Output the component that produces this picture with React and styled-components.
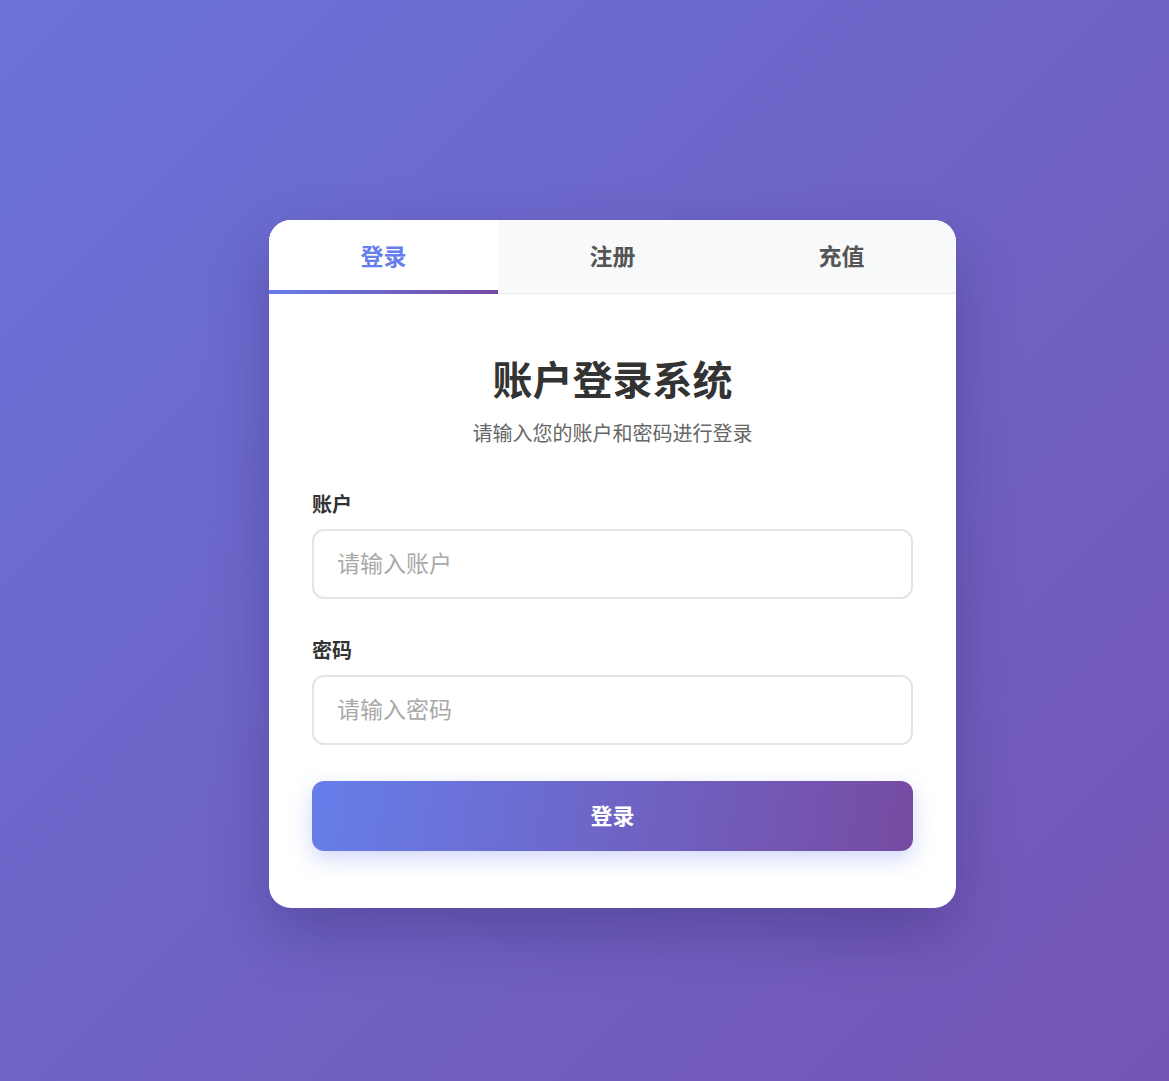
import React, { useState } from "react";
import styled, { createGlobalStyle } from "styled-components";

const Global = createGlobalStyle`
  * { box-sizing: border-box; }
  html, body { margin: 0; padding: 0; }
  body {
    min-height: 1081px;
    background: linear-gradient(135deg, #6a72d8 0%, #7455b4 100%);
    font-family: "Noto Sans CJK SC", "Noto Sans", sans-serif;
  }
`;

const Page = styled.div`
  min-height: 1081px;
  padding: 220px 0 0 269px;
`;

const Card = styled.div`
  width: 687px;
  background: #fff;
  border-radius: 22px;
  overflow: hidden;
  box-shadow: 0 25px 60px rgba(30, 20, 80, 0.28);
`;

const Tabs = styled.div`
  display: flex;
  background: #f8f9fa;
  border-bottom: 1px solid #e6e9ee;
`;

const Tab = styled.button`
  flex: 1;
  height: 74px;
  margin-bottom: -1px;
  border: none;
  background: ${(p) => (p.$active ? "#fff" : "transparent")};
  color: ${(p) => (p.$active ? "#667eea" : "#555")};
  font-family: inherit;
  font-size: 23px;
  font-weight: 700;
  cursor: pointer;
  position: relative;
  padding: 0 0 4px;
  &::after {
    content: "";
    position: absolute;
    left: 0;
    right: 0;
    bottom: 0;
    height: 4px;
    background: linear-gradient(90deg, #667eea, #764ba2);
    opacity: ${(p) => (p.$active ? 1 : 0)};
  }
`;

const Body = styled.div`
  padding: 60px 43px 57px;
  display: flex;
  flex-direction: column;
`;

const Title = styled.h1`
  margin: 0;
  text-align: center;
  font-size: 40px;
  line-height: 48px;
  font-weight: 700;
  color: #333;
`;

const Subtitle = styled.p`
  margin: 17px 0 0;
  text-align: center;
  font-size: 20px;
  line-height: 28px;
  color: #666;
`;

const Field = styled.div`
  display: flex;
  flex-direction: column;
  gap: 11px;
  margin-top: ${(p) => p.$mt}px;
`;

const Label = styled.label`
  font-size: 20px;
  line-height: 28px;
  font-weight: 700;
  color: #333;
`;

const Input = styled.input`
  width: 100%;
  height: 70px;
  border: 2.5px solid #e1e5e9;
  border-radius: 12px;
  padding: 0 23px 5px;
  font-family: inherit;
  font-size: 23px;
  color: #333;
  outline: none;
  &::placeholder { color: #a9a9a9; }
`;

const Button = styled.button`
  margin-top: 36px;
  height: 70px;
  border: none;
  border-radius: 12px;
  background: linear-gradient(100deg, #667eea 0%, #764ba2 100%);
  color: #fff;
  font-family: inherit;
  font-size: 22px;
  font-weight: 700;
  cursor: pointer;
  padding: 0 0 4px;
  box-shadow: 0 8px 22px rgba(102, 126, 234, 0.3);
`;

export default function App() {
  const [tab, setTab] = useState(0);
  const tabs = ["登录", "注册", "充值"];
  return (
    <>
      <Global />
      <Page>
        <Card>
          <Tabs>
            {tabs.map((t, i) => (
              <Tab key={t} $active={tab === i} onClick={() => setTab(i)}>
                {t}
              </Tab>
            ))}
          </Tabs>
          <Body>
            <Title>账户登录系统</Title>
            <Subtitle>请输入您的账户和密码进行登录</Subtitle>
            <Field $mt={43}>
              <Label>账户</Label>
              <Input placeholder="请输入账户" />
            </Field>
            <Field $mt={37}>
              <Label>密码</Label>
              <Input type="password" placeholder="请输入密码" />
            </Field>
            <Button>登录</Button>
          </Body>
        </Card>
      </Page>
    </>
  );
}
